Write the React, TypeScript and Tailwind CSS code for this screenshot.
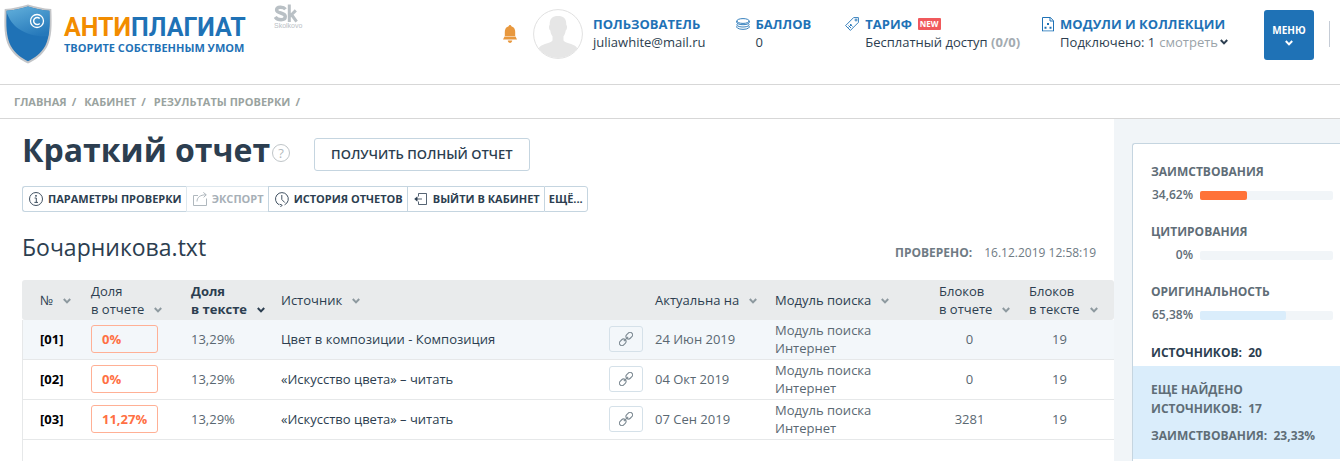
import type { ReactNode } from 'react'
import clsx from 'clsx'

type Row = {
  id: string
  reportShare: string
  textShare: string
  source: string
  date: string
  module: string
  reportBlocks: number
  textBlocks: number
}

const rows: Row[] = [
  {
    id: '[01]',
    reportShare: '0%',
    textShare: '13,29%',
    source: 'Цвет в композиции - Композиция',
    date: '24 Июн 2019',
    module: 'Модуль поиска Интернет',
    reportBlocks: 0,
    textBlocks: 19,
  },
  {
    id: '[02]',
    reportShare: '0%',
    textShare: '13,29%',
    source: '«Искусство цвета» – читать',
    date: '04 Окт 2019',
    module: 'Модуль поиска Интернет',
    reportBlocks: 0,
    textBlocks: 19,
  },
  {
    id: '[03]',
    reportShare: '11,27%',
    textShare: '13,29%',
    source: '«Искусство цвета» – читать',
    date: '07 Сен 2019',
    module: 'Модуль поиска Интернет',
    reportBlocks: 3281,
    textBlocks: 19,
  },
]

const stats = [
  { label: 'Заимствования', value: '34,62%', width: 35.3, color: 'bg-[#ff7238]' },
  { label: 'Цитирования', value: '0%', width: 0, color: 'bg-[#8bc34a]' },
  { label: 'Оригинальность', value: '65,38%', width: 64.7, color: 'bg-[#daedfb]' },
]

const crumbs = ['Главная', 'Кабинет', 'Результаты проверки']

function Chevron({ className }: { className?: string }) {
  return (
    <svg viewBox="0 0 8 6" className={clsx('h-[6px] w-2 shrink-0', className)} fill="none" stroke="currentColor" strokeWidth="2">
      <path d="M0.8 1 L4 4.4 L7.2 1" />
    </svg>
  )
}

function ShieldLogo() {
  return (
    <svg viewBox="0 0 48 60" className="h-[60px] w-12 shrink-0">
      <defs>
        <linearGradient id="gloss" x1="0.2" y1="0" x2="0.7" y2="1">
          <stop offset="0" stopColor="#5eacd9" />
          <stop offset="1" stopColor="#2578ba" />
        </linearGradient>
      </defs>
      <path
        d="M24 0.5 C31 2.5 39 4.6 47.3 5 C48 22 48 33 43 43 C38 51.5 31 56.5 24 59.5 C17 56.5 10 51.5 5 43 C0 33 0 22 0.7 5 C9 4.6 17 2.5 24 0.5 Z"
        fill="#c3c5c8"
      />
      <path
        d="M24 2.5 C31 4.5 38 6.3 45.4 6.8 C46 22 45.8 32.5 41.3 41.8 C37 49.5 30.5 54.3 24 57.2 C17.5 54.3 11 49.5 6.7 41.8 C2.2 32.5 2 22 2.6 6.8 C10 6.3 17 4.5 24 2.5 Z"
        fill="#1f72b6"
      />
      <path
        d="M24 2.5 C31 4.5 38 6.3 45.4 6.8 C45.7 16 45.6 24 44.2 32 C34 33 24 31 15 25 C9 21 5 15 2.5 8 L2.6 6.8 C10 6.3 17 4.5 24 2.5 Z"
        fill="url(#gloss)"
      />
      <circle cx="33" cy="17" r="6.5" fill="none" stroke="#fff" strokeWidth="1.3" />
      <path d="M35.7 14.6 A3.5 3.5 0 1 0 35.7 19.4" fill="none" stroke="#fff" strokeWidth="1.4" />
    </svg>
  )
}

function SkolkovoLogo() {
  return (
    <svg viewBox="0 0 31 27" className="h-[27px] w-[31px] shrink-0" fill="none" stroke="#b9c0c5">
      <path d="M11.5 5.2 C9.5 2.6 2.6 2.3 2.6 6 C2.6 10 11.3 8 11.3 12.6 C11.3 17 3.5 16.6 1.2 13" strokeWidth="3.4" />
      <path d="M15.3 0.5 V18 M16 12.3 L21.8 6.4 M17.8 11 L22.6 17.6" strokeWidth="3" />
      <text x="0" y="24" fontSize="7" fill="#b9c0c5" stroke="none" fontFamily="Liberation Sans, sans-serif">
        Skolkovo
      </text>
    </svg>
  )
}

function BellIcon() {
  return (
    <svg viewBox="0 0 14 18" className="h-[18px] w-[14px] shrink-0" fill="#e8983e">
      <circle cx="7" cy="1.4" r="1.3" />
      <path d="M7 1.2 C10.5 1.2 12.2 3.6 12.2 7 V11 H1.8 V7 C1.8 3.6 3.5 1.2 7 1.2 Z" />
      <path d="M1.5 11.6 H12.5 L14 14.4 H0 Z" />
      <path d="M4.8 15.6 H9.2 C9.2 17 8 18 7 18 S4.8 17 4.8 15.6 Z" />
    </svg>
  )
}

function Avatar() {
  return (
    <svg viewBox="0 0 50 50" className="h-[50px] w-[50px] shrink-0">
      <clipPath id="round">
        <circle cx="25" cy="25" r="24" />
      </clipPath>
      <circle cx="25" cy="25" r="24.4" fill="#fff" stroke="#e1e1e1" strokeWidth="1" />
      <g clipPath="url(#round)" fill="#e6e6e6">
        <path d="M25 7 C30.5 7 33.5 9.5 33.3 16 C34.6 16.5 34 21 32.7 21.5 C32.3 24.5 31.5 26 30.5 27.2 V31.5 C32 34 37 34 41.5 36.5 C45 38.5 46 43 46.5 50 H3.5 C4 43 5 38.5 8.5 36.5 C13 34 18 34 19.5 31.5 V27.2 C18.5 26 17.7 24.5 17.3 21.5 C16 21 15.4 16.5 16.7 16 C16.5 9.5 19.5 7 25 7 Z" />
      </g>
    </svg>
  )
}

function CoinsIcon() {
  return (
    <svg viewBox="0 0 14 12" className="h-3 w-[14px]" fill="none" stroke="#1f72b6" strokeWidth="0.9">
      <ellipse cx="7" cy="3" rx="6.2" ry="2.4" />
      <path d="M0.8 3 V4.6 C1.6 7.4 12.4 7.4 13.2 4.6 V3" />
      <path d="M1.4 5.8 C0.9 6.3 0.8 6.8 1 7.2 C2.2 9.6 11.8 9.6 13 7.2 C13.2 6.8 13.1 6.3 12.6 5.8" />
      <path d="M1.2 8 C0.4 8.6 0.6 9.4 1.4 10 C3.5 11.8 10.5 11.8 12.6 10 C13.4 9.4 13.6 8.6 12.8 8" />
    </svg>
  )
}

function TagIcon() {
  return (
    <svg viewBox="0 0 14 14" className="h-[14px] w-[14px]" fill="none" stroke="#1f72b6" strokeWidth="0.9">
      <path d="M8.6 0.6 H13.4 V5.4 L5.4 13.4 L0.6 8.6 Z" />
      <circle cx="11" cy="3" r="1" />
      <path d="M3.5 8.5 L6 11 M5 7 L7.5 9.5 M3.5 10.5 L6.5 7.5" />
    </svg>
  )
}

function ModulesIcon() {
  return (
    <svg viewBox="0 0 12 15" className="h-[15px] w-3" fill="none" stroke="#1f72b6">
      <path d="M0.5 0.5 H8.3 L11.5 3.7 V14 H0.5 Z" />
      <path d="M8 0.5 V4 H11.5" />
      <path d="M0 14.5 H12" stroke="#bcd6eb" />
      <path d="M5 6 h2 v2 h-2 z M2.5 9.8 h2 v2 h-2 z M7.5 9.8 h2 v2 h-2 z" fill="#1f72b6" stroke="none" />
    </svg>
  )
}

function InfoIcon() {
  return (
    <svg viewBox="0 0 14 14" className="h-[14px] w-[14px]" fill="none" stroke="currentColor" strokeWidth="0.9">
      <circle cx="7" cy="7" r="6.5" />
      <path d="M5.6 6 H7.3 V10.4 M5.4 10.4 H9" />
      <circle cx="7" cy="3.8" r="0.9" fill="currentColor" stroke="none" />
    </svg>
  )
}

function ExportIcon() {
  return (
    <svg viewBox="0 0 14 14" className="h-[14px] w-[14px]" fill="none" stroke="currentColor" strokeWidth="0.9">
      <path d="M5 3.5 H0.5 V13.5 H13.5 V6.5" />
      <path d="M4 9.5 C4 5.5 7 2.8 13 2.8 M10.3 0.4 L13.3 2.8 L10.6 5.4" />
    </svg>
  )
}

function HistoryIcon() {
  return (
    <svg viewBox="0 0 14 15" className="h-[15px] w-[14px]" fill="none" stroke="currentColor" strokeWidth="0.9">
      <path d="M4.2 12.8 A6.4 6.4 0 1 1 9.6 12.8" />
      <path d="M6.8 3 V7.5 L9.8 10.6" />
      <path d="M4.6 12.2 L7.2 13.2 L5.4 15" />
    </svg>
  )
}

function ExitIcon() {
  return (
    <svg viewBox="0 0 14 12" className="h-3 w-[14px]" fill="none" stroke="currentColor" strokeWidth="0.8">
      <path d="M4.5 3.5 V0.5 H12.5 V11.5 H4.5 V8.5" />
      <path d="M1 6 H8" />
      <path d="M3.2 3.8 L0.6 6 L3.2 8.2 Z" fill="currentColor" strokeWidth="0.5" />
    </svg>
  )
}

function LinkIcon() {
  return (
    <svg viewBox="0 0 14 14" className="h-[14px] w-[14px]" fill="none" stroke="#7d8a93" strokeWidth="1.1">
      <rect x="-3.6" y="-2.5" width="7.2" height="5" rx="2.5" transform="translate(10.3 3.7) rotate(-45)" />
      <rect x="-3.6" y="-2.5" width="7.2" height="5" rx="2.5" transform="translate(3.7 10.3) rotate(-45)" />
      <path d="M4.8 9.2 L9.2 4.8" />
    </svg>
  )
}

function InfoBlock({
  icon,
  title,
  className,
  children,
}: {
  icon?: ReactNode
  title: ReactNode
  className?: string
  children: ReactNode
}) {
  return (
    <div className={clsx('grid grid-cols-[auto_auto] gap-x-[6px] text-[13px] leading-[18px] text-[#2c3e50]', className)}>
      <div className="flex items-center">{icon}</div>
      <div className="flex items-center gap-[6px] font-bold uppercase text-[#1f72b6]">{title}</div>
      <div className="col-start-2">{children}</div>
    </div>
  )
}

function Header() {
  return (
    <header className="flex h-[85px] items-start justify-between border-b border-[#d7d7d7] pl-1 pr-[10px]">
      <div className="flex items-start">
        <a href="#" className="flex items-start gap-3 pt-1" aria-label="Антиплагиат">
          <ShieldLogo />
          <span className="pt-[10px] font-bold text-[#1f72b6]">
            <span className="block font-[Roboto,sans-serif] text-[25px] leading-7">
              <span className="text-[#f28c00]">АНТИ</span>ПЛАГИАТ
            </span>
            <span className="block text-[11px] leading-3">ТВОРИТЕ СОБСТВЕННЫМ УМОМ</span>
          </span>
        </a>
        <div className="ml-7 pt-1">
          <SkolkovoLogo />
        </div>
      </div>
      <div className="flex items-start pt-[9px]">
        <div className="pt-4">
          <BellIcon />
        </div>
        <div className="ml-4">
          <Avatar />
        </div>
        <div className="ml-1 flex pt-[6px]">
          <InfoBlock title="Пользователь">juliawhite@mail.ru</InfoBlock>
          <InfoBlock className="ml-[30px]" icon={<CoinsIcon />} title="Баллов">
            0
          </InfoBlock>
          <InfoBlock
            className="ml-[34px]"
            icon={<TagIcon />}
            title={
              <>
                Тариф
                <span className="rounded-[1px] bg-[#f0595c] px-[2px] text-[8px] leading-3 text-white">NEW</span>
              </>
            }
          >
            Бесплатный доступ <b className="text-[#a3abb1]">(0/0)</b>
          </InfoBlock>
          <InfoBlock className="ml-[22px]" icon={<ModulesIcon />} title="Модули и коллекции">
            <span className="flex items-center">
              Подключено: 1
              <a href="#" className="ml-1 mr-[2px] text-[#9aa3a9]">
                смотреть
              </a>
              <Chevron />
            </span>
          </InfoBlock>
        </div>
        <button
          type="button"
          className="ml-9 mt-px flex h-[50px] w-[50px] flex-col items-center justify-center gap-1 rounded-[3px] bg-[#1f72b6] text-[10px] font-bold leading-3 text-white"
        >
          МЕНЮ
          <Chevron />
        </button>
        <div className="ml-[15px] mt-3 h-[26px] w-px bg-[#c5ccd6]" />
      </div>
    </header>
  )
}

function ToolButton({ icon, children, disabled }: { icon?: ReactNode; children: ReactNode; disabled?: boolean }) {
  return (
    <button
      type="button"
      disabled={disabled}
      className={clsx(
        'flex h-[26px] items-center gap-[5px] border border-r-0 pr-1 text-[11px] font-bold uppercase first:rounded-l-[3px] last:rounded-r-[3px] last:border-r',
        icon ? 'pl-[6px]' : 'pl-1',
        disabled ? 'border-[#dfe8ee] text-[#a7b0b7]' : 'border-[#c5d5e0] text-[#2c3e50]',
      )}
    >
      {icon}
      {children}
    </button>
  )
}

function HeadCell({ lines, active }: { lines: string[]; active?: boolean }) {
  return (
    <th
      className={clsx(
        'bg-[#e9ebec] p-0 text-left text-[#2c3e50] first:rounded-l-[3px] first:pl-[18px] last:rounded-r-[3px]',
        active ? 'font-bold' : 'font-normal',
      )}
    >
      <div className="flex items-end gap-[10px]">
        <span>
          {lines.map((line) => (
            <span key={line} className="block whitespace-nowrap">
              {line}
            </span>
          ))}
        </span>
        <Chevron className={clsx('mb-[5px]', !active && 'text-[#8d999f]')} />
      </div>
    </th>
  )
}

function SourcesTable() {
  return (
    <table className="w-full table-fixed border-separate border-spacing-0 text-[13px] leading-[18px] text-[#5a6872]">
      <colgroup>
        <col className="w-[69px]" />
        <col className="w-[100px]" />
        <col className="w-[90px]" />
        <col />
        <col className="w-[46px]" />
        <col className="w-[120px]" />
        <col className="w-[164px]" />
        <col className="w-[90px]" />
        <col className="w-[85px]" />
      </colgroup>
      <thead>
        <tr className="h-10">
          <HeadCell lines={['№']} />
          <HeadCell lines={['Доля', 'в отчете']} />
          <HeadCell lines={['Доля', 'в тексте']} active />
          <HeadCell lines={['Источник']} />
          <th className="bg-[#e9ebec] p-0" />
          <HeadCell lines={['Актуальна на']} />
          <HeadCell lines={['Модуль поиска']} />
          <HeadCell lines={['Блоков', 'в отчете']} />
          <HeadCell lines={['Блоков', 'в тексте']} />
        </tr>
      </thead>
      <tbody>
        {rows.map((row) => (
          <tr
            key={row.id}
            className="h-10 first:bg-[#f3f7fa] [&>td]:border-b [&>td]:border-[#e6e8e9] [&>td]:px-0 [&>td]:pb-[2px] [&>td]:pt-0"
          >
            <td className="border-l font-bold text-black">
              <span className="pl-[17px]">{row.id}</span>
            </td>
            <td>
              <div className="h-7 w-[67px] rounded-[3px] border border-[#ffb095] pl-[10px] font-bold leading-[26px] text-[#ff7043]">
                {row.reportShare}
              </div>
            </td>
            <td>{row.textShare}</td>
            <td className="text-[#2c3e50]">{row.source}</td>
            <td>
              <a
                href="#"
                aria-label="Открыть источник"
                className="flex h-[26px] w-[34px] items-center justify-center rounded-[3px] border border-[#d5e1e9]"
              >
                <LinkIcon />
              </a>
            </td>
            <td>{row.date}</td>
            <td>
              <div className="w-[110px]">{row.module}</div>
            </td>
            <td>
              <div className="w-[61px] text-center">{row.reportBlocks}</div>
            </td>
            <td>
              <div className="w-[61px] text-center">{row.textBlocks}</div>
            </td>
          </tr>
        ))}
      </tbody>
    </table>
  )
}

function Sidebar() {
  return (
    <aside className="flex w-[226px] shrink-0 flex-col bg-[#f1f5f8] pl-[18px] pt-6 text-[12px] font-bold uppercase text-[#5f6d77]">
      <div className="flex-1 rounded-tl-[3px] border-l border-t border-[#c5d5e0] bg-white">
        <div className="pl-[18px] pr-[7px] pt-[18px]">
          {stats.map((stat) => (
            <div key={stat.label} className="h-[60px] leading-5">
              <div>{stat.label}</div>
              <div className="mt-[3px] flex items-center gap-[7px]">
                <span className="w-[42px] text-right font-semibold">{stat.value}</span>
                <div className="h-[9px] flex-1 rounded-[2px] bg-[#f1f5f8]">
                  <div className={clsx('h-full rounded-[2px]', stat.color)} style={{ width: `${stat.width}%` }} />
                </div>
              </div>
            </div>
          ))}
          <div className="h-6 leading-[22px] text-[#2c3e50]">Источников:&nbsp; 20</div>
        </div>
        <div className="bg-[#daedfb] pb-[14px] pl-[18px] pt-[14px] leading-[19px]">
          <div>Еще найдено</div>
          <div>Источников:&nbsp; 17</div>
          <div className="mt-2">Заимствования:&nbsp; 23,33%</div>
        </div>
      </div>
    </aside>
  )
}

export default function App() {
  return (
    <div className="flex min-h-screen flex-col bg-white font-['Open_Sans',sans-serif] text-[#2c3e50]">
      <Header />
      <nav className="flex h-[34px] items-center gap-2 border-b border-[#d7d7d7] pl-[14px] pt-[2px] text-[11px] font-bold uppercase text-[#9aa3a0]">
        {crumbs.map((crumb) => (
          <span key={crumb} className="flex gap-[5px]">
            <a href="#">{crumb}</a>
            <span>/</span>
          </span>
        ))}
      </nav>
      <div className="flex flex-1">
        <main className="flex flex-1 flex-col pl-[22px]">
          <div className="flex h-[67px] items-start">
            <h1 className="pt-[9px] text-[32px] font-bold leading-[44px]">Краткий отчет</h1>
            <button
              type="button"
              aria-label="Справка"
              className="ml-[2px] mt-[25px] flex h-[18px] w-[18px] items-center justify-center rounded-full border border-[#bfc5c8] text-[13px] leading-none text-[#b4babd]"
            >
              ?
            </button>
            <button
              type="button"
              className="ml-6 mt-[19px] h-[33px] rounded-[3px] border border-[#c5d5e0] px-4 text-[13px] font-semibold uppercase"
            >
              Получить полный отчет
            </button>
          </div>
          <div className="flex">
            <ToolButton icon={<InfoIcon />}>Параметры проверки</ToolButton>
            <ToolButton icon={<ExportIcon />} disabled>
              Экспорт
            </ToolButton>
            <ToolButton icon={<HistoryIcon />}>История отчетов</ToolButton>
            <ToolButton icon={<ExitIcon />}>Выйти в кабинет</ToolButton>
            <ToolButton>Ещё...</ToolButton>
          </div>
          <div className="flex h-[68px] items-center justify-between pr-[18px]">
            <h2 className="pt-[2px] text-[23px] leading-8">Бочарникова.txt</h2>
            <div className="flex gap-3 pt-[14px] text-[12px] text-[#6f7b84]">
              <b>ПРОВЕРЕНО:</b>
              <span>16.12.2019 12:58:19</span>
            </div>
          </div>
          <SourcesTable />
          <div className="flex-1 border-l border-[#e6e8e9]" />
        </main>
        <Sidebar />
      </div>
    </div>
  )
}
